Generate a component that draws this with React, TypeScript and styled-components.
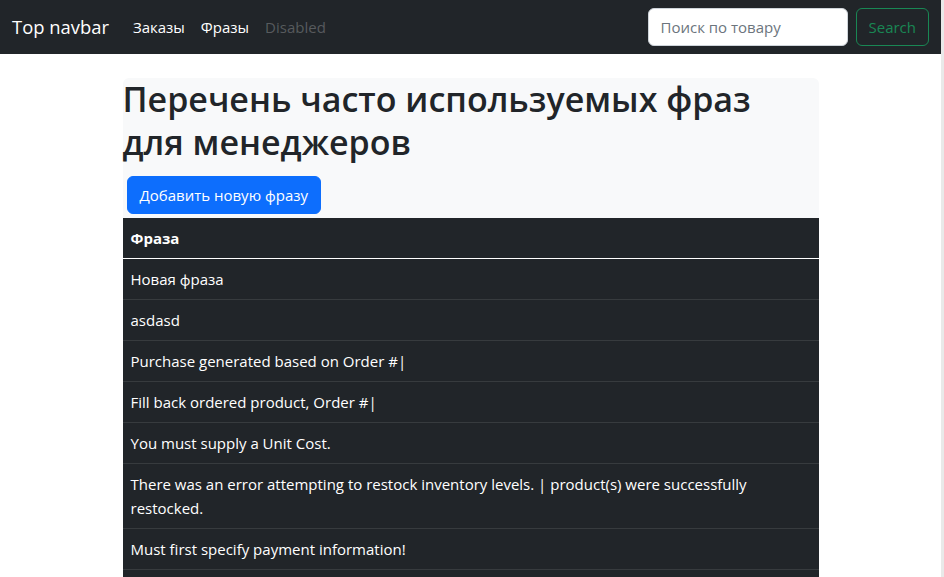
import React from "react";
import styled, { createGlobalStyle } from "styled-components";

const FONT = `"Open Sans", "Noto Sans", "Liberation Sans", sans-serif`;

const GlobalStyle = createGlobalStyle`
  html { background: #e9e9e9; }
  body {
    margin: 0;
    font-family: ${FONT};
    font-size: 15px;
    line-height: 24px;
    color: #212529;
  }
  #root {
    margin-right: 3px;
    background: #fff;
    min-height: 100vh;
  }
  * { box-sizing: border-box; }
`;

const Navbar = styled.nav`
  display: flex;
  align-items: center;
  justify-content: space-between;
  height: 54px;
  padding: 0 12px;
  background: #212529;
`;

const NavLeft = styled.div`
  display: flex;
  align-items: center;
`;

const Brand = styled.a`
  font-size: 18.4px;
  line-height: 30px;
  color: #fff;
  margin-right: 16px;
  text-decoration: none;
`;

const NavLink = styled.a<{ $disabled?: boolean }>`
  padding: 8px;
  font-size: 15px;
  color: ${(p) => (p.$disabled ? "rgba(255,255,255,0.25)" : "#fff")};
  text-decoration: none;
`;

const SearchForm = styled.form`
  display: flex;
  align-items: center;
`;

const SearchInput = styled.input`
  width: 200px;
  height: 38px;
  padding: 6px 12px;
  margin-right: 8px;
  font-family: ${FONT};
  font-size: 15px;
  border: 1px solid #ced4da;
  border-radius: 6px;
  background: #fff;
  color: #212529;
  &::placeholder { color: #6c757d; }
`;

const OutlineButton = styled.button`
  height: 38px;
  padding: 6px 12px;
  font-family: ${FONT};
  font-size: 15px;
  color: #198754;
  background: transparent;
  border: 1px solid #198754;
  border-radius: 6px;
`;

const Container = styled.main`
  max-width: 720px;
  margin: 24px auto 0;
  padding: 0 12px;
`;

const Panel = styled.section`
  background: #f8f9fa;
  border-radius: 6px;
`;

const Title = styled.h1`
  margin: 0 0 8px;
  font-size: 34px;
  font-weight: 600;
  line-height: 43px;
  color: #212529;
`;

const PrimaryButton = styled.button`
  height: 38px;
  margin: 4px;
  padding: 6px 12px;
  font-family: ${FONT};
  font-size: 15px;
  color: #fff;
  background: #0d6efd;
  border: 1px solid #0d6efd;
  border-radius: 6px;
`;

const Table = styled.table`
  width: 100%;
  border-collapse: collapse;
  background: #212529;
  color: #fff;
`;

const HeadCell = styled.th`
  text-align: left;
  font-weight: 700;
  padding: 8px;
  border-bottom: 1px solid #fff;
`;

const Cell = styled.td`
  padding: 8px;
  border-bottom: 1px solid #373b3e;
`;

const phrases = [
  "Новая фраза",
  "asdasd",
  "Purchase generated based on Order #|",
  "Fill back ordered product, Order #|",
  "You must supply a Unit Cost.",
  "There was an error attempting to restock inventory levels. | product(s) were successfully restocked.",
  "Must first specify payment information!",
  "Invoice generated based on Order #|",
  "Restock completed.",
];

export default function App() {
  return (
    <>
      <GlobalStyle />
      <Navbar>
        <NavLeft>
          <Brand href="#">Top navbar</Brand>
          <NavLink href="#">Заказы</NavLink>
          <NavLink href="#">Фразы</NavLink>
          <NavLink $disabled>Disabled</NavLink>
        </NavLeft>
        <SearchForm onSubmit={(e) => e.preventDefault()}>
          <SearchInput type="search" placeholder="Поиск по товару" />
          <OutlineButton type="submit">Search</OutlineButton>
        </SearchForm>
      </Navbar>
      <Container>
        <Panel>
          <Title>
            Перечень часто используемых фраз
            <br />
            для менеджеров
          </Title>
          <PrimaryButton>Добавить новую фразу</PrimaryButton>
          <Table>
            <thead>
              <tr>
                <HeadCell>Фраза</HeadCell>
              </tr>
            </thead>
            <tbody>
              {phrases.map((p, i) => (
                <tr key={i}>
                  <Cell>{p}</Cell>
                </tr>
              ))}
            </tbody>
          </Table>
        </Panel>
      </Container>
    </>
  );
}
